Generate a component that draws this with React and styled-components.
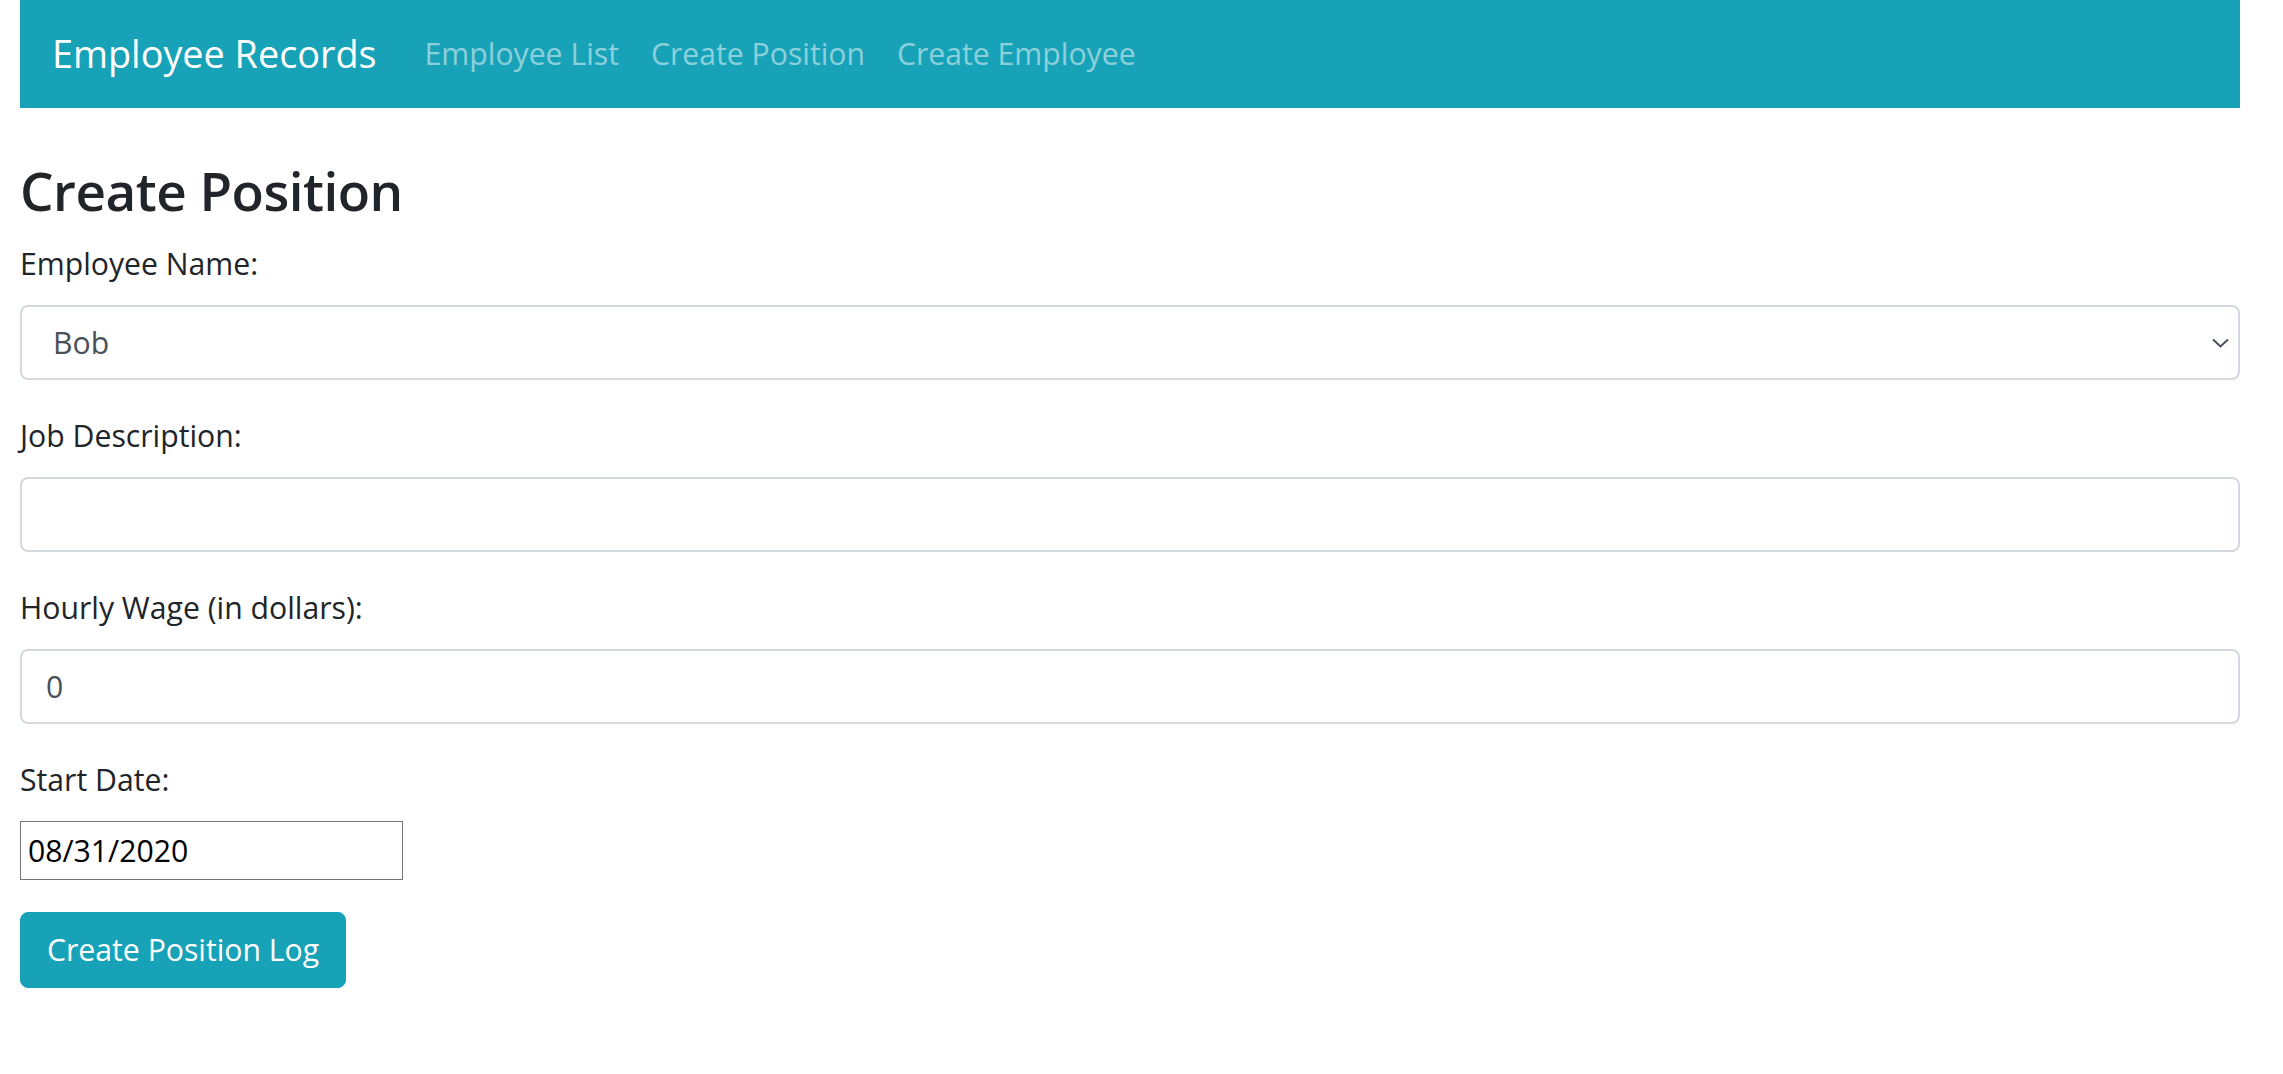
import React from 'react';
import styled, { createGlobalStyle } from 'styled-components';

const GlobalStyle = createGlobalStyle`
  body {
    margin: 0;
    background: #fff;
    color: #212529;
    font-family: "Open Sans", "Noto Sans", sans-serif;
    font-size: 30.2px;
    line-height: 48px;
  }
`;

const Container = styled.div`
  width: 2220px;
  margin-left: 20px;
`;

const Navbar = styled.nav`
  display: flex;
  align-items: center;
  height: 108px;
  padding: 0 32px;
  background: #17a2b8;
`;

const Brand = styled.span`
  font-size: 37.8px;
  line-height: 60px;
  color: #fff;
  margin-right: 32px;
  white-space: nowrap;
`;

const NavList = styled.div`
  display: flex;
  align-items: center;
`;

const NavLink = styled.a`
  padding: 0 16px;
  color: rgba(255, 255, 255, 0.5);
  text-decoration: none;
  white-space: nowrap;
`;

const Title = styled.h3`
  margin: 49px 0 16px;
  font-size: 53px;
  font-weight: 600;
  letter-spacing: -0.5px;
  line-height: 67px;
`;

const FormGroup = styled.div`
  margin-bottom: 32px;
`;

const Label = styled.label`
  display: block;
  margin-bottom: 17px;
`;

const Control = styled.input`
  display: block;
  box-sizing: border-box;
  width: 100%;
  height: 75px;
  padding: 12px 24px;
  border: 2px solid #d3d8de;
  border-radius: 8px;
  background: #fff;
  color: #495057;
  font: inherit;
  outline: none;
`;

const SelectWrap = styled.div`
  position: relative;
`;

const Select = styled(Control).attrs({ as: 'select' })`
  appearance: none;
  padding-left: 31px;
`;

const Chevron = styled.svg`
  position: absolute;
  right: 11px;
  top: 33px;
  width: 17px;
  height: 10px;
  pointer-events: none;
`;

const DateInput = styled.input`
  display: block;
  box-sizing: border-box;
  width: 383px;
  height: 59px;
  padding: 0 7px;
  border: 1px solid #767676;
  border-radius: 0;
  color: #000;
  font: inherit;
  outline: none;
`;

const Button = styled.button`
  display: inline-block;
  height: 76px;
  padding: 12px 26px;
  border: 1px solid #17a2b8;
  border-radius: 8px;
  background: #17a2b8;
  color: #fff;
  font: inherit;
  cursor: pointer;
`;

export default function App() {
  return (
    <Container>
      <GlobalStyle />
      <Navbar>
        <Brand>Employee Records</Brand>
        <NavList>
          <NavLink href="#">Employee List</NavLink>
          <NavLink href="#">Create Position</NavLink>
          <NavLink href="#">Create Employee</NavLink>
        </NavList>
      </Navbar>

      <Title>Create Position</Title>
      <form onSubmit={e => e.preventDefault()}>
        <FormGroup>
          <Label>Employee Name:</Label>
          <SelectWrap>
            <Select defaultValue="Bob">
              <option>Bob</option>
            </Select>
            <Chevron viewBox="0 0 17 10">
              <path d="M1 1.5 L8.5 8.5 L16 1.5" fill="none" stroke="#495057" strokeWidth="2" />
            </Chevron>
          </SelectWrap>
        </FormGroup>
        <FormGroup>
          <Label>Job Description:</Label>
          <Control type="text" defaultValue="" />
        </FormGroup>
        <FormGroup>
          <Label>Hourly Wage (in dollars):</Label>
          <Control type="text" defaultValue="0" />
        </FormGroup>
        <FormGroup>
          <Label>Start Date:</Label>
          <DateInput type="text" defaultValue="08/31/2020" />
        </FormGroup>
        <Button type="submit">Create Position Log</Button>
      </form>
    </Container>
  );
}
